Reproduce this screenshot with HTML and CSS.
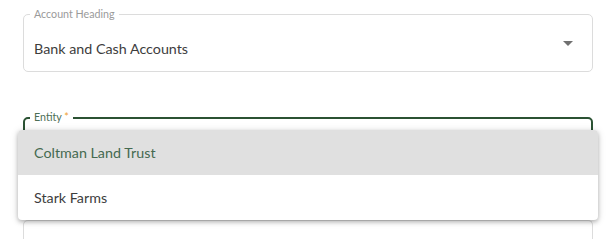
FILE: index.html
```html
<!DOCTYPE html>
<html lang="en">
<head>
  <meta charset="UTF-8" />
  <title>Account Form</title>
  <link rel="stylesheet" href="styles.css">
</head>
<body>
  <div class="form">
    <div class="field">
      <span class="field-label">Account Heading</span>
      <span class="field-value">Bank and Cash Accounts</span>
      <span class="caret"></span>
    </div>

    <div class="field field-focused">
      <span class="field-label">Entity <span class="required">*</span></span>
      <ul class="menu">
        <li class="menu-item menu-item-active">Coltman Land Trust</li>
        <li class="menu-item">Stark Farms</li>
      </ul>
    </div>

    <div class="field field-last"></div>
  </div>
</body>
</html>
```

FILE: styles.css
```css
* {
  box-sizing: border-box;
}

body {
  margin: 0;
  background: #fff;
  font-family: Lato, 'Noto Sans', sans-serif;
  color: #3d3d3d;
  overflow: hidden;
}

.form {
  display: flex;
  flex-direction: column;
  gap: 45px;
  padding: 14px 19px 0 23px;
}

.field {
  position: relative;
  display: flex;
  align-items: center;
  height: 58px;
  padding: 0 10px;
  border: 1px solid #dcdcdc;
  border-radius: 5px;
}

.field-last {
  height: 19px;
  border-bottom: none;
  border-radius: 5px 5px 0 0;
}

.field-label {
  position: absolute;
  top: -8px;
  left: 6px;
  padding: 0 4px;
  background: #fff;
  font-size: 10.7px;
  line-height: 14px;
  color: #9a9a9a;
}

.field-value {
  padding-top: 10px;
  font-size: 14.3px;
  color: #3d3d3d;
}

.caret {
  margin-left: auto;
  margin-right: 9px;
  width: 0;
  height: 0;
  border-left: 5px solid transparent;
  border-right: 5px solid transparent;
  border-top: 5px solid #707070;
}

.field-focused {
  border: 2px solid #2b5233;
}

.field-focused .field-label {
  top: -9px;
  left: 5px;
  color: #4c6e56;
}

.required {
  color: #f0a030;
}

.menu {
  position: absolute;
  top: 11px;
  left: -7px;
  width: 580px;
  margin: 0;
  padding: 0;
  list-style: none;
  background: #fff;
  border-radius: 4px;
  box-shadow: 0 2px 4px rgba(0, 0, 0, 0.25), 0 1px 8px rgba(0, 0, 0, 0.12);
  overflow: hidden;
  z-index: 2;
}

.menu-item {
  height: 45px;
  display: flex;
  align-items: center;
  padding-left: 16px;
  font-size: 14.3px;
  color: #3d3d3d;
}

.menu-item-active {
  background: #e0e0e0;
  color: #456a50;
}
```
